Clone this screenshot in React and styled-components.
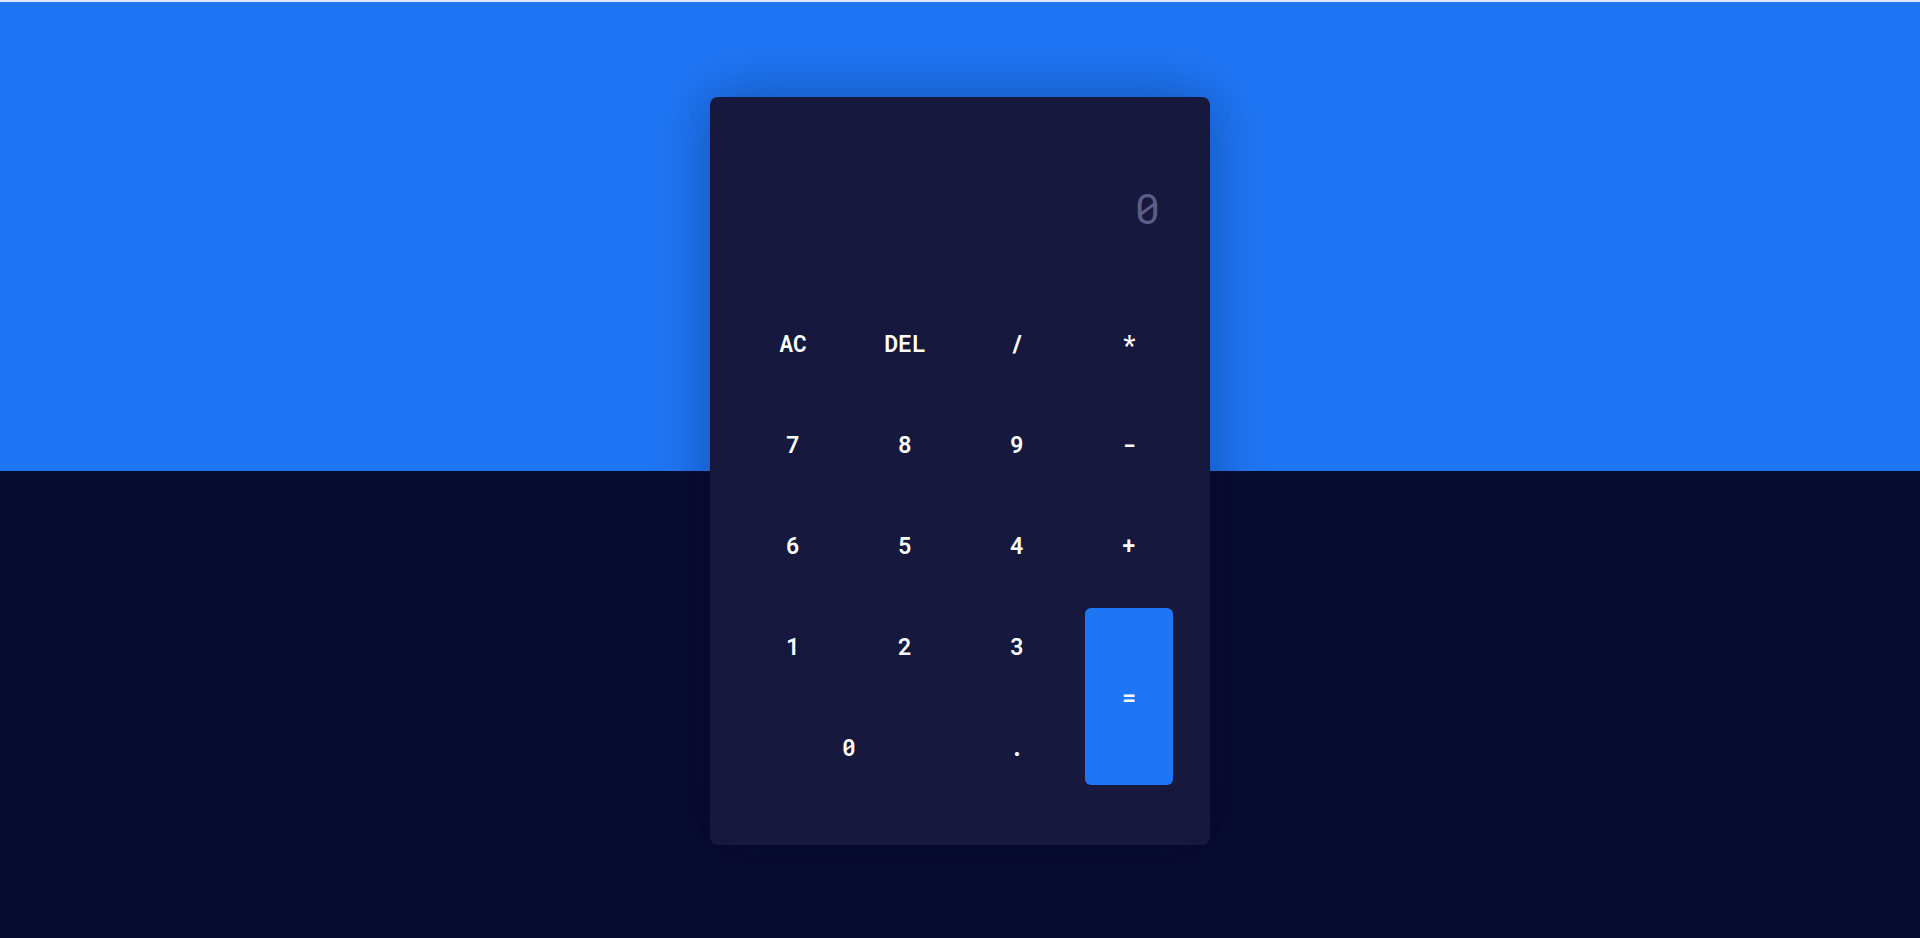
import React, { useState } from 'react';
import styled, { createGlobalStyle } from 'styled-components';

const GlobalStyle = createGlobalStyle`
  html, body {
    margin: 0;
    padding: 0;
    height: 100%;
  }
  body {
    background: #080c30;
    font-family: "Roboto Mono", "DejaVu Sans Mono", "Liberation Mono", monospace;
  }
  #root {
    height: 100%;
  }
`;

const KEYS = [
  { label: 'AC' },
  { label: 'DEL' },
  { label: '/' },
  { label: '*' },
  { label: '7' },
  { label: '8' },
  { label: '9' },
  { label: '-' },
  { label: '6' },
  { label: '5' },
  { label: '4' },
  { label: '+' },
  { label: '1' },
  { label: '2' },
  { label: '3' },
  { label: '=', accent: true, rows: 2 },
  { label: '0', cols: 2 },
  { label: '.' },
];

const App = () => {
  const [value] = useState('0');

  return (
    <>
      <GlobalStyle />
      <Page>
        <Calculator>
          <Display>{value}</Display>
          <Keypad>
            {KEYS.map((k) => (
              <Key key={k.label} $accent={k.accent} $cols={k.cols} $rows={k.rows}>
                {k.label}
              </Key>
            ))}
          </Keypad>
        </Calculator>
      </Page>
    </>
  );
};

export default App;

const Page = styled.div`
  height: 100%;
  display: flex;
  align-items: flex-start;
  justify-content: center;
  padding-top: 97px;
  box-sizing: border-box;
  background: linear-gradient(
    to bottom,
    #dfe8f7 0,
    #dfe8f7 2px,
    #1f76f5 2px,
    #1f76f5 471px,
    #080c30 471px
  );
`;

const Calculator = styled.div`
  width: 500px;
  height: 748px;
  box-sizing: border-box;
  padding: 0 37px 0 39px;
  background: #16193d;
  border-radius: 8px;
  box-shadow: 0 0 60px rgba(5, 8, 40, 0.35);
`;

const Display = styled.div`
  height: 208px;
  box-sizing: border-box;
  padding: 12px 13px 0 0;
  display: flex;
  align-items: center;
  justify-content: flex-end;
  color: #5e5b84;
  font-size: 42px;
`;

const Keypad = styled.div`
  display: grid;
  grid-template-columns: repeat(4, 88px);
  grid-auto-rows: 76px;
  row-gap: 25px;
  column-gap: 24px;
`;

const Key = styled.button`
  grid-column: span ${(p) => p.$cols || 1};
  grid-row: span ${(p) => p.$rows || 1};
  border: none;
  border-radius: 6px;
  background: ${(p) => (p.$accent ? '#1f76f5' : 'transparent')};
  color: #ffffff;
  font-family: inherit;
  font-size: 23px;
  font-weight: 600;
  cursor: pointer;
  padding: 0;
`;
